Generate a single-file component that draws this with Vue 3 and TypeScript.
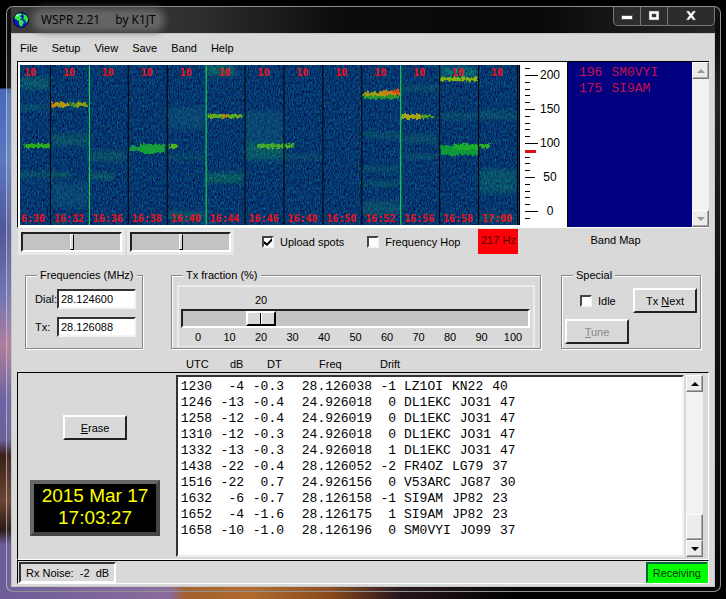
<script setup lang="ts">
import { ref } from 'vue'

interface Spot {
  utc: string
  snr: string
  dt: string
  freq: string
  drift: string
  call: string
  grid: string
  power: string
}

interface Trace {
  x: number
  y: number
  w: number
  h: number
  color: string
}

const menus = ['File', 'Setup', 'View', 'Save', 'Band', 'Help']

const times = ['6:30', '16:32', '16:36', '16:38', '16:40', '16:44', '16:46', '16:48', '16:50', '16:52', '16:56', '16:58', '17:00']
const columnWidth = 39
const columns = times.map((time, i) => ({
  time,
  center: 10 + i * columnWidth,
  timeCenter: Math.max(13, 10 + i * columnWidth),
  edge: 30 + i * columnWidth,
  bandStart: i === 1 || i === 4 || i === 9,
}))

const faint: Trace[] = [
  { x: 0, y: 12, w: 30, h: 12, color: '#12806a' },
  { x: 0, y: 40, w: 30, h: 4, color: '#12806a' },
  { x: 0, y: 107, w: 30, h: 5, color: '#12806a' },
  { x: 31, y: 69, w: 37, h: 12, color: '#12705f' },
  { x: 31, y: 108, w: 18, h: 4, color: '#10a050' },
  { x: 31, y: 118, w: 37, h: 24, color: '#125c78' },
  { x: 70, y: 86, w: 36, h: 10, color: '#12705f' },
  { x: 70, y: 108, w: 24, h: 6, color: '#12905a' },
  { x: 148, y: 42, w: 37, h: 22, color: '#125c78' },
  { x: 148, y: 90, w: 37, h: 4, color: '#12705f' },
  { x: 148, y: 147, w: 37, h: 8, color: '#12805f' },
  { x: 187, y: 0, w: 28, h: 10, color: '#10a058' },
  { x: 187, y: 108, w: 37, h: 10, color: '#109058' },
  { x: 226, y: 46, w: 38, h: 50, color: '#125c78' },
  { x: 226, y: 78, w: 38, h: 16, color: '#108c5c' },
  { x: 265, y: 90, w: 36, h: 4, color: '#126c68' },
  { x: 343, y: 68, w: 38, h: 4, color: '#10805c' },
  { x: 343, y: 102, w: 38, h: 4, color: '#10805c' },
  { x: 343, y: 117, w: 38, h: 4, color: '#10805c' },
  { x: 343, y: 136, w: 38, h: 14, color: '#126c68' },
  { x: 382, y: 20, w: 36, h: 6, color: '#126c68' },
  { x: 382, y: 70, w: 36, h: 8, color: '#126c68' },
  { x: 382, y: 89, w: 36, h: 5, color: '#126c68' },
  { x: 421, y: 2, w: 37, h: 10, color: '#10a070' },
  { x: 421, y: 48, w: 37, h: 6, color: '#126c68' },
  { x: 460, y: 46, w: 37, h: 8, color: '#126c68' },
  { x: 460, y: 104, w: 37, h: 24, color: '#107868' },
  { x: 460, y: 150, w: 37, h: 6, color: '#107868' },
]

const strong: Trace[] = [
  { x: 4, y: 79, w: 26, h: 4, color: '#30c010' },
  { x: 31, y: 37, w: 18, h: 5, color: '#c8a800' },
  { x: 31, y: 37, w: 4, h: 5, color: '#ff7800' },
  { x: 49, y: 38, w: 6, h: 4, color: '#50a020' },
  { x: 55, y: 37, w: 12, h: 5, color: '#a0b000' },
  { x: 110, y: 81, w: 12, h: 5, color: '#18a840' },
  { x: 120, y: 79, w: 25, h: 9, color: '#18b030' },
  { x: 149, y: 79, w: 8, h: 4, color: '#60c810' },
  { x: 187, y: 49, w: 35, h: 4, color: '#70c010' },
  { x: 203, y: 49, w: 5, h: 4, color: '#e09000' },
  { x: 238, y: 79, w: 27, h: 4, color: '#50b820' },
  { x: 265, y: 79, w: 10, h: 4, color: '#50c810' },
  { x: 344, y: 30, w: 36, h: 4, color: '#28a830' },
  { x: 344, y: 27, w: 20, h: 4, color: '#b8b000' },
  { x: 362, y: 25, w: 18, h: 5, color: '#e89000' },
  { x: 374, y: 25, w: 5, h: 4, color: '#ff4800' },
  { x: 382, y: 49, w: 20, h: 5, color: '#c0b800' },
  { x: 402, y: 50, w: 14, h: 3, color: '#58b010' },
  { x: 421, y: 12, w: 37, h: 4, color: '#98c800' },
  { x: 421, y: 81, w: 38, h: 9, color: '#10a830' },
  { x: 434, y: 79, w: 25, h: 6, color: '#20c020' },
  { x: 460, y: 79, w: 10, h: 4, color: '#30c020' },
]

const ticks = Array.from({ length: 23 }, (_, i) => {
  const hz = 210 - i * 10
  return { hz, y: Math.round(146 - hz * 0.68), length: hz % 100 === 0 ? 13 : hz % 50 === 0 ? 10 : 5 }
})

const bandMap = [
  { offset: '196', call: 'SM0VYI' },
  { offset: '175', call: 'SI9AM' },
]

const spots: Spot[] = [
  { utc: '1230', snr: '-4', dt: '-0.3', freq: '28.126038', drift: '-1', call: 'LZ1OI', grid: 'KN22', power: '40' },
  { utc: '1246', snr: '-13', dt: '-0.4', freq: '24.926018', drift: '0', call: 'DL1EKC', grid: 'JO31', power: '47' },
  { utc: '1258', snr: '-12', dt: '-0.4', freq: '24.926019', drift: '0', call: 'DL1EKC', grid: 'JO31', power: '47' },
  { utc: '1310', snr: '-12', dt: '-0.3', freq: '24.926018', drift: '0', call: 'DL1EKC', grid: 'JO31', power: '47' },
  { utc: '1332', snr: '-13', dt: '-0.3', freq: '24.926018', drift: '1', call: 'DL1EKC', grid: 'JO31', power: '47' },
  { utc: '1438', snr: '-22', dt: '-0.4', freq: '28.126052', drift: '-2', call: 'FR4OZ', grid: 'LG79', power: '37' },
  { utc: '1516', snr: '-22', dt: '0.7', freq: '24.926156', drift: '0', call: 'V53ARC', grid: 'JG87', power: '30' },
  { utc: '1632', snr: '-6', dt: '-0.7', freq: '28.126158', drift: '-1', call: 'SI9AM', grid: 'JP82', power: '23' },
  { utc: '1652', snr: '-4', dt: '-1.6', freq: '28.126175', drift: '1', call: 'SI9AM', grid: 'JP82', power: '23' },
  { utc: '1658', snr: '-10', dt: '-1.0', freq: '28.126196', drift: '0', call: 'SM0VYI', grid: 'JO99', power: '37' },
]

const fractionMarks = [0, 10, 20, 30, 40, 50, 60, 70, 80, 90, 100]

const gain = ref(50)
const contrast = ref(50)
const upload = ref(true)
const hop = ref(false)
const idle = ref(false)
const dial = ref('28.124600')
const txFreq = ref('28.126088')
const fraction = ref(20)
</script>

<template>
  <div class="desktop">
    <div class="window">
      <header class="titlebar">
        <svg class="globe" viewBox="0 0 16 16" aria-hidden="true">
          <circle cx="8" cy="8" r="7.5" fill="#0a18c8" stroke="#05063c" />
          <path d="M2 4 5 1.500 8 1 9 3 7 4 9 6 7 8 5 9 3 7 1.500 7Z" fill="#2ee83c" />
          <path d="M6 8 9 8 11 10 9 14 8 15 6 12Z" fill="#2ee83c" />
          <path d="M10 2 13 3 15 6 15 9 13 11 12 8 10 7 11 5Z" fill="#2ee83c" />
          <path d="M3 3 5 2 6 3 4 5Z" fill="#b8f4ff" />
        </svg>
        <h1 class="title"><span>WSPR 2.21</span><span>by K1JT</span></h1>
        <div class="caption-buttons">
          <button type="button" aria-label="Minimize">
            <svg width="14" height="12" viewBox="0 0 14 12"><rect x="1.500" y="6.500" width="11" height="4" fill="#fff" stroke="#555" /></svg>
          </button>
          <button type="button" aria-label="Maximize">
            <svg width="14" height="12" viewBox="0 0 14 12"><path d="M2 2h10v9H2zM5 5v3h4V5z" fill="#fff" fill-rule="evenodd" stroke="#555" stroke-width="0.500" /></svg>
          </button>
          <button type="button" class="close" aria-label="Close">
            <svg width="14" height="12" viewBox="0 0 14 12"><path d="M2 2h3l2 2.500L9 2h3L8.700 6.500 12 11H9L7 8.500 5 11H2l3.300-4.500z" fill="#fff" stroke="#555" stroke-width="0.500" /></svg>
          </button>
        </div>
      </header>

      <main class="client">
        <nav class="menubar">
          <button v-for="menu in menus" :key="menu" type="button">{{ menu }}</button>
        </nav>

        <section class="display">
          <div class="graph">
            <svg class="waterfall" width="500" height="160" viewBox="0 0 500 160" role="img" aria-label="Waterfall">
              <defs>
                <filter id="noise" x="0" y="0" width="100%" height="100%" color-interpolation-filters="sRGB">
                  <feTurbulence type="fractalNoise" baseFrequency="0.8 0.35" numOctaves="2" seed="4" />
                  <feColorMatrix values="0 0 0 0 0.02  0.55 0 0 0 -0.06  0.25 0.35 0 0 0.13  0 0 0 0 1" />
                </filter>
                <filter id="haze" x="0" y="0" width="500" height="160" filterUnits="userSpaceOnUse" color-interpolation-filters="sRGB">
                  <feGaussianBlur in="SourceGraphic" stdDeviation="2 2" result="soft" />
                  <feTurbulence type="fractalNoise" baseFrequency="0.6 0.4" numOctaves="2" seed="9" />
                  <feColorMatrix values="0 0 0 0 0  0 0 0 0 0  0 0 0 0 0  1.8 0 0 0 -0.3" result="grain" />
                  <feComposite in="soft" in2="grain" operator="in" />
                </filter>
                <filter id="signal" x="0" y="0" width="500" height="160" filterUnits="userSpaceOnUse" color-interpolation-filters="sRGB">
                  <feTurbulence type="fractalNoise" baseFrequency="0.4 0.3" numOctaves="2" seed="2" result="grain" />
                  <feDisplacementMap in="SourceGraphic" in2="grain" scale="6" xChannelSelector="R" yChannelSelector="G" result="rough" />
                  <feGaussianBlur in="rough" stdDeviation="0.700" />
                </filter>
              </defs>
              <rect width="500" height="160" filter="url(#noise)" />
              <g filter="url(#haze)" opacity="0.700">
                <rect v-for="(t, i) in faint" :key="i" :x="t.x" :y="t.y" :width="t.w" :height="t.h" :fill="t.color" />
              </g>
              <g filter="url(#signal)" opacity="0.850">
                <rect v-for="(t, i) in strong" :key="i" :x="t.x" :y="t.y" :width="t.w" :height="t.h" :fill="t.color" />
              </g>
              <rect
                v-for="c in columns" :key="c.time" :x="c.edge" y="0" width="1" height="160"
                :fill="c.bandStart ? '#20e850' : '#000'"
              />
              <g class="marks">
                <template v-for="c in columns" :key="c.time">
                  <text :x="c.center" y="11">10</text>
                  <text :x="c.timeCenter" y="157">{{ c.time }}</text>
                </template>
              </g>
            </svg>
            <svg class="scale" width="46" height="163" viewBox="0 0 46 163" role="img" aria-label="Frequency scale in Hz">
              <template v-for="t in ticks" :key="t.hz">
                <rect x="4" :y="t.y" :width="t.length" height="1" fill="#000" />
                <text v-if="t.hz % 50 === 0" x="29" :y="t.y + 4">{{ t.hz }}</text>
              </template>
              <rect x="4" y="85" width="11" height="3" fill="#e01018" />
            </svg>
          </div>
          <ul class="bandmap">
            <li v-for="b in bandMap" :key="b.call"><span>{{ b.offset }}</span><span>{{ b.call }}</span></li>
          </ul>
          <div class="scrollbar disabled">
            <button type="button" aria-label="Scroll band map up" disabled><svg width="8" height="4" viewBox="0 0 8 4"><path d="M4 0 8 4H0z" /></svg></button>
            <div class="track"></div>
            <button type="button" aria-label="Scroll band map down" disabled><svg width="8" height="4" viewBox="0 0 8 4"><path d="M0 0H8L4 4z" /></svg></button>
          </div>
        </section>

        <section class="controls">
          <div class="adjust">
            <input v-model.number="gain" type="range" min="0" max="100" aria-label="Gain">
            <input v-model.number="contrast" type="range" min="0" max="100" aria-label="Contrast">
          </div>
          <label class="check"><input v-model="upload" type="checkbox">Upload spots</label>
          <label class="check"><input v-model="hop" type="checkbox">Frequency Hop</label>
          <output class="offset">217 Hz</output>
          <span class="caption">Band Map</span>
        </section>

        <section class="groups">
          <fieldset class="frequencies">
            <legend>Frequencies (MHz)</legend>
            <div class="field"><label for="dial">Dial:</label><input id="dial" v-model="dial" type="text"></div>
            <div class="field"><label for="tx">Tx:</label><input id="tx" v-model="txFreq" type="text"></div>
          </fieldset>

          <fieldset class="fraction">
            <legend>Tx fraction (%)</legend>
            <div class="dial-scale">
              <div class="value-row"><output :style="{ left: fraction + '%' }">{{ fraction }}</output></div>
              <input v-model.number="fraction" type="range" min="0" max="100" aria-label="Tx fraction (%)">
              <div class="numbers"><span v-for="m in fractionMarks" :key="m">{{ m }}</span></div>
            </div>
          </fieldset>

          <fieldset class="special">
            <legend>Special</legend>
            <div class="special-grid">
              <label class="check"><input v-model="idle" type="checkbox">Idle</label>
              <button type="button" class="push"><span>Tx <u>N</u>ext</span></button>
              <button type="button" class="push" disabled><span><u>T</u>une</span></button>
            </div>
          </fieldset>
        </section>

        <div class="headings">
          <span>UTC</span><span>dB</span><span>DT</span><span>Freq</span><span>Drift</span>
        </div>

        <section class="decodes">
          <div class="side">
            <button type="button" class="push"><span><u>E</u>rase</span></button>
            <time class="clock" datetime="2015-03-17T17:03:27">2015 Mar 17<br>17:03:27</time>
          </div>
          <div class="listing">
            <table aria-label="Decoded spots">
              <tbody>
                <tr v-for="s in spots" :key="s.utc">
                  <td class="utc">{{ s.utc }}</td>
                  <td class="snr">{{ s.snr }}</td>
                  <td class="dt">{{ s.dt }}</td>
                  <td class="freq">{{ s.freq }}</td>
                  <td class="drift">{{ s.drift }}</td>
                  <td class="message"><div><span>{{ s.call }}</span><span>{{ s.grid }}</span><span>{{ s.power }}</span></div></td>
                </tr>
              </tbody>
            </table>
          </div>
          <div class="scrollbar">
            <button type="button" aria-label="Scroll up"><svg width="8" height="4" viewBox="0 0 8 4"><path d="M4 0 8 4H0z" /></svg></button>
            <div class="track"><div class="thumb"></div></div>
            <button type="button" aria-label="Scroll down"><svg width="8" height="4" viewBox="0 0 8 4"><path d="M0 0H8L4 4z" /></svg></button>
          </div>
        </section>

        <footer class="status">
          <span class="noise">Rx Noise:&nbsp; -2&nbsp; dB</span>
          <span class="state">Receiving</span>
        </footer>
      </main>
    </div>
  </div>
</template>

<style>
body {
  margin: 0;
  background: #000;
}
</style>

<style scoped>
* {
  box-sizing: border-box;
}

.desktop {
  min-height: 100vh;
  padding: 6px 5px 7px 6px;
  font: 11px/14px "Liberation Sans", Arial, sans-serif;
  color: #000;
  background:
    linear-gradient(90deg, #6c5c98 0, #8a6c9c 170px, #a4602c 185px, #b06a2c 250px, #8a4a1c 330px, #24141c 400px, #000 520px) bottom / 100% 16px no-repeat,
    linear-gradient(180deg, #000 0, #000 88px, #4668b8 89px, #5a78c0 160px, #50569a 230px, #7676b4 300px, #b07c9c 345px, #6c62a4 400px, #6c6098 440px, #3a2018 455px, #6a4430 500px, #2c1c1c 530px, #6c5c98 545px) left / 14px 100% no-repeat,
    #000;
}

.window {
  padding: 0 5px 4px 4px;
  border: 1px solid rgba(200, 200, 200, 0.7);
  border-radius: 7px;
  background: linear-gradient(180deg, #141414 0, #0c0c0c 26px, rgba(255, 255, 255, 0.14) 90px, rgba(255, 255, 255, 0.08) 250px, rgba(255, 255, 255, 0.03) 100%);
}

.titlebar {
  display: flex;
  align-items: flex-start;
  height: 26px;
  padding-left: 2px;
  background: linear-gradient(90deg, #3c3c3c 0, #303030 180px, #0c0c0c 330px, #080808 520px, #262626 100%);
}

.globe {
  width: 16px;
  height: 16px;
  margin-top: 5px;
}

.title {
  display: flex;
  gap: 15px;
  margin: 6px 0 0 8px;
  padding: 0 4px;
  font: 12px/14px "Open Sans", "Noto Sans", sans-serif;
  color: #000;
  border-radius: 8px;
  background: #646464;
  box-shadow: 0 0 7px 5px #646464;
}

.caption-buttons {
  display: flex;
  height: 19px;
  margin-left: auto;
  border: 1px solid #777;
  border-top: 0;
  border-radius: 0 0 5px 5px;
  background: #2c2c2c;
}

.caption-buttons button {
  display: flex;
  align-items: center;
  justify-content: center;
  width: 27px;
  padding: 0 0 3px;
  border: 0;
  border-right: 1px solid #777;
  background: none;
}

.caption-buttons .close {
  width: 46px;
  border-right: 0;
}

.client {
  padding: 0 5px 2px;
  border: 1px solid #c4c4c4;
  background: #d9d9d9;
}

.menubar {
  display: flex;
  gap: 14px;
  height: 27px;
  padding-left: 3px;
}

.menubar button {
  padding: 0;
  border: 0;
  font: inherit;
  color: inherit;
  background: none;
}

.display {
  display: flex;
  height: 167px;
  border: 1px solid #000;
  border-right: 0;
  border-bottom-color: #fff;
}

.graph {
  display: flex;
  flex: none;
  gap: 1px;
  padding: 3px 0 0 2px;
  background: #fff;
}

.marks text {
  font: bold 10px "DejaVu Sans Mono", monospace;
  fill: #f01018;
  text-anchor: middle;
}

.waterfall {
  border-right: 1px solid #000;
}

.scale text {
  font: 12px "Liberation Sans", Arial, sans-serif;
  text-anchor: middle;
}

.bandmap {
  flex: 1;
  margin: 0;
  padding: 3px 0 0 11px;
  border-left: 1px solid #000;
  list-style: none;
  font: 13px/16px "Liberation Mono", "Courier New", monospace;
  color: #c8104c;
  background: #000080;
}

.bandmap li {
  display: flex;
  gap: 9px;
}

.scrollbar {
  display: flex;
  flex-direction: column;
  width: 17px;
}

.scrollbar button,
.thumb {
  display: flex;
  align-items: center;
  justify-content: center;
  height: 17px;
  padding: 0;
  border: 1px solid;
  border-color: #fff #777 #777 #fff;
  background: #ececec;
  box-shadow: inset -1px -1px 0 #aaa;
}

.track {
  display: flex;
  flex: 1;
  flex-direction: column;
  justify-content: flex-end;
  background: #f2f2f2;
}

.thumb {
  height: 26px;
}

.disabled path {
  fill: #999;
}

.controls {
  display: flex;
  align-items: flex-start;
  height: 40px;
  padding: 0 1px;
}

.adjust {
  display: flex;
  gap: 8px;
  padding: 3px 0 0 3px;
}

input[type="range"] {
  display: block;
  margin: 0;
  appearance: none;
  border: 2px solid;
  border-color: #222 #fff #fff #222;
  background: #c3c3c3;
}

.adjust input {
  width: 101px;
  height: 20px;
  margin: 1px 0;
  outline: 3px solid #e8e8e8;
}

input[type="range"]::-webkit-slider-thumb {
  width: 4px;
  height: 16px;
  appearance: none;
  border: 1px solid;
  border-color: #fff #000 #000 #fff;
  background: #d9d9d9;
}

.check {
  display: flex;
  align-items: center;
  gap: 6px;
}

.controls .check {
  margin: 7px 0 0 31px;
}

.controls .check + .check {
  margin-left: 23px;
}

.check input {
  display: grid;
  place-items: center;
  width: 12px;
  height: 12px;
  margin: 0;
  appearance: none;
  border: 2px solid;
  border-color: #444 #f4f4f4 #f4f4f4 #444;
  background: #fff;
}

.check input:checked::before {
  width: 8px;
  height: 8px;
  content: "";
  background: #000;
  clip-path: polygon(0 38%, 38% 66%, 100% 0, 100% 38%, 38% 100%, 0 72%);
}

.offset {
  width: 40px;
  height: 25px;
  margin: 1px 0 0 18px;
  line-height: 22px;
  text-align: center;
  color: #500;
  background: #fb0006;
}

.caption {
  flex: 1;
  padding: 5px 0 0 72px;
}

.groups {
  display: grid;
  grid-template-columns: 118px 1fr 140px;
  padding: 0 8px;
}

fieldset {
  min-width: 0;
  height: 81px;
  margin: 0;
  padding: 0 10px;
  border: 1px solid #888;
  box-shadow: 1px 1px 0 #fff, inset 1px 1px 0 #fff;
}

legend {
  padding: 0 3px;
  white-space: nowrap;
  background: #d9d9d9;
}

.frequencies .field {
  display: flex;
  align-items: center;
  margin-top: 7px;
}

.frequencies .field + .field {
  margin-top: 8px;
}

.frequencies {
  padding: 0 6px 0 9px;
}

.frequencies legend {
  margin-left: 2px;
}

.field label {
  width: 22px;
}

.field input {
  flex: 1;
  min-width: 0;
  height: 20px;
  padding: 0 2px;
  border: 2px solid;
  border-color: #333 #f4f4f4 #f4f4f4 #333;
  font: inherit;
  background: #fff;
}

.fraction {
  margin: 0 20px 0 28px;
  padding: 0 5px;
}

.fraction legend {
  margin-left: 6px;
}

.dial-scale {
  height: 62px;
  margin-top: 3px;
  padding: 6px 3px 0 2px;
  border: 2px solid #ececec;
  border-bottom-width: 1px;
}

.value-row {
  position: relative;
  height: 14px;
  margin: 0 17px 2px;
}

.value-row output {
  position: absolute;
  transform: translateX(-50%);
}

.dial-scale input {
  width: 100%;
  height: 19px;
}

.dial-scale input::-webkit-slider-thumb {
  width: 30px;
  height: 15px;
  border-width: 2px;
  background: linear-gradient(90deg, #d9d9d9 12px, #000 12px, #000 13px, #fff 13px, #fff 14px, #d9d9d9 14px);
}

.numbers {
  display: flex;
  justify-content: space-between;
  margin: 2px 2px 0;
}

.numbers span {
  width: 30px;
  text-align: center;
}

.special {
  padding: 0 3px;
}

.special legend {
  margin-left: 8px;
}

.special-grid {
  display: grid;
  grid-template-columns: 64px 64px;
  gap: 6px 4px;
  padding-top: 6px;
}

.special-grid .check {
  padding-left: 15px;
}

.push {
  width: 64px;
  height: 25px;
  padding: 0;
  border: 2px solid;
  border-color: #fff #222 #222 #fff;
  font: inherit;
  color: #000;
  background: #d9d9d9;
}

.push:disabled {
  color: #888;
}

.headings {
  display: grid;
  grid-template-columns: 44px 37px 52px 61px auto;
  height: 23px;
  padding: 8px 0 0 169px;
}

.decodes {
  display: flex;
  height: 188px;
  padding: 2px 5px 2px 0;
  border: 1px solid #000;
  border-right-color: #fff;
  border-bottom-color: #fff;
}

.side {
  display: flex;
  flex-direction: column;
  align-items: center;
  gap: 40px;
  width: 158px;
  padding: 40px 4px 0 0;
}

.clock {
  padding: 1px 8px 3px;
  border: 4px solid;
  border-color: #666 #444 #444 #666;
  font-size: 19px;
  line-height: 22px;
  text-align: center;
  color: #ff0;
  background: #000;
}

.listing {
  flex: 1;
  margin-right: 2px;
  padding: 2px 2px 0;
  border: 2px solid;
  border-color: #333 #f4f4f4 #ececec #333;
  background: #fff;
}

table {
  border-collapse: collapse;
  font: 13px/16px "Liberation Mono", "Courier New", monospace;
}

td {
  padding: 0;
  text-align: right;
}

.utc,
.snr {
  width: 32px;
}

.dt {
  width: 40px;
}

.freq {
  width: 88px;
}

.drift {
  width: 24px;
}

.message {
  padding-left: 8px;
}

.message div {
  display: flex;
  gap: 9px;
}

.status {
  display: flex;
  justify-content: space-between;
  height: 24px;
  padding: 1px 0 0 1px;
  border: 1px solid #000;
  border-right-color: #fff;
  border-bottom-color: #fff;
}

.noise,
.state {
  padding: 2px 5px;
  border: 2px solid;
  border-color: #333 #fff #fff #333;
}

.state {
  border-color: #063 #0f0 #0f0 #063;
  color: #030;
  background: #0f0;
}
</style>
